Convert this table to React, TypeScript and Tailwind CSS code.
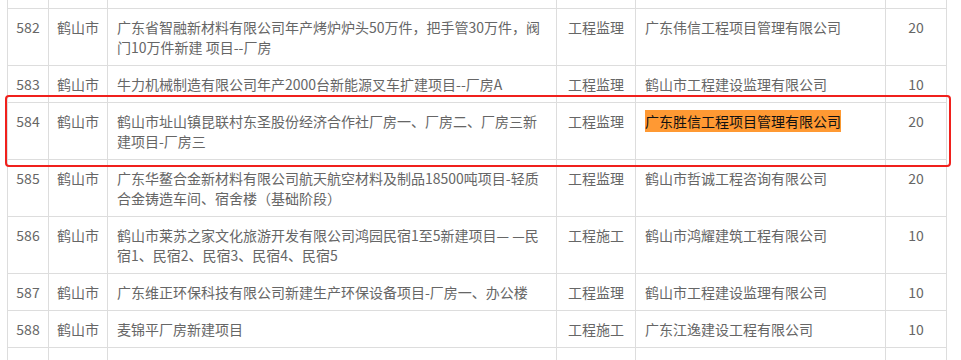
type Row = {
  no: string;
  city: string;
  name: string;
  kind: string;
  company: string;
  score: string;
  mark?: boolean;
};

const rows: Row[] = [
  { no: "582", city: "鹤山市", name: "广东省智融新材料有限公司年产烤炉炉头50万件，把手管30万件，阀门10万件新建 项目--厂房", kind: "工程监理", company: "广东伟信工程项目管理有限公司", score: "20" },
  { no: "583", city: "鹤山市", name: "牛力机械制造有限公司年产2000台新能源叉车扩建项目--厂房A", kind: "工程监理", company: "鹤山市工程建设监理有限公司", score: "10" },
  { no: "584", city: "鹤山市", name: "鹤山市址山镇昆联村东圣股份经济合作社厂房一、厂房二、厂房三新建项目-厂房三", kind: "工程监理", company: "广东胜信工程项目管理有限公司", score: "20", mark: true },
  { no: "585", city: "鹤山市", name: "广东华鳌合金新材料有限公司航天航空材料及制品18500吨项目-轻质合金铸造车间、宿舍楼（基础阶段）", kind: "工程监理", company: "鹤山市哲诚工程咨询有限公司", score: "20" },
  { no: "586", city: "鹤山市", name: "鹤山市莱苏之家文化旅游开发有限公司鸿园民宿1至5新建项目— —民宿1、民宿2、民宿3、民宿4、民宿5", kind: "工程施工", company: "鹤山市鸿耀建筑工程有限公司", score: "10" },
  { no: "587", city: "鹤山市", name: "广东维正环保科技有限公司新建生产环保设备项目-厂房一、办公楼", kind: "工程监理", company: "鹤山市工程建设监理有限公司", score: "10" },
  { no: "588", city: "鹤山市", name: "麦锦平厂房新建项目", kind: "工程施工", company: "广东江逸建设工程有限公司", score: "10" },
];

const grid = "grid grid-cols-[41px_59px_449px_79px_250px_61px]";
const cell = "border-r border-b border-[#dddddd] py-2 leading-5";

export default function App() {
  return (
    <div
      className="relative w-[961px] h-[360px] overflow-hidden bg-white text-[14px] text-[#666666]"
      style={{ fontFamily: '"Noto Sans CJK SC", "Noto Sans", sans-serif' }}
    >
      <div className="ml-[7px] w-[940px] border-l border-[#dddddd]">
        {/* cut-off row above */}
        <div className={`${grid} h-[9px]`}>
          {[0, 1, 2, 3, 4, 5].map((i) => (
            <div key={i} className="border-r border-b border-[#dddddd]" />
          ))}
        </div>

        {rows.map((r) => (
          <div key={r.no} className={grid}>
            <div className={`${cell} text-center`}>{r.no}</div>
            <div className={`${cell} text-center`}>{r.city}</div>
            <div className={`${cell} px-[9px]`}>{r.name}</div>
            <div className={`${cell} text-center`}>{r.kind}</div>
            <div className={`${cell} px-[9px]`}>
              {r.mark ? (
                <span className="bg-[#ff9933] text-[#111111] py-[1px]">{r.company}</span>
              ) : (
                r.company
              )}
            </div>
            <div className={`${cell} text-center`}>{r.score}</div>
          </div>
        ))}

        {/* next row, cut off by the window */}
        <div className={`${grid} h-[40px]`}>
          {[0, 1, 2, 3, 4, 5].map((i) => (
            <div key={i} className="border-r border-b border-[#dddddd]" />
          ))}
        </div>
      </div>

      {/* red marker box over row 584 */}
      <div className="absolute left-[5px] top-[95px] w-[946px] h-[72px] border-2 border-[#f0201c] rounded-[4px]" />
    </div>
  );
}
